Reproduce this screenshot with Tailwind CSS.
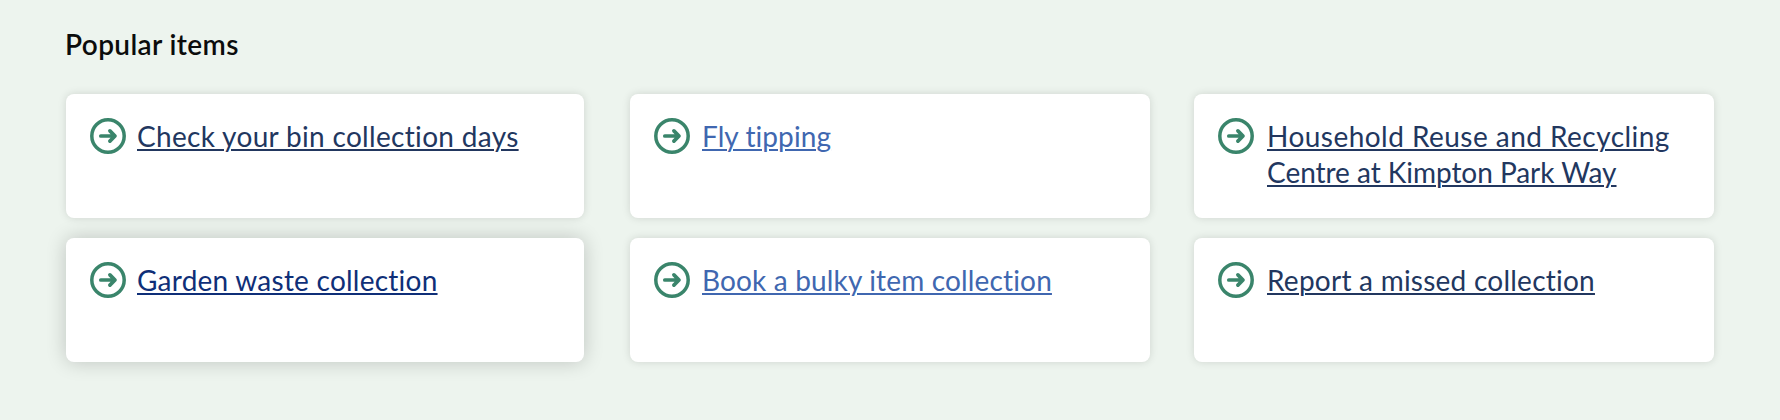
<!DOCTYPE html>
<html lang="en">
<head>
  <meta charset="UTF-8" />
  <meta name="viewport" content="width=device-width, initial-scale=1.0"/>
  <title>Popular items</title>
  <script src="https://cdn.jsdelivr.net/npm/@tailwindcss/browser@4"></script>
</head>
<body class="bg-[#edf4ee] min-h-screen overflow-hidden font-['Lato',sans-serif]">
  <svg class="hidden">
    <symbol id="arrow" viewBox="0 0 36 36">
      <circle cx="18" cy="18" r="16.2" fill="none" stroke="#3a856b" stroke-width="3.5" />
      <path d="M10.8 18H24M19.9 12.9L25 18L19.9 23.1" fill="none" stroke="#3a856b" stroke-width="3.7" stroke-linecap="round" stroke-linejoin="round" />
    </symbol>
  </svg>

  <section class="pl-[66px] pt-[26px]">
    <h2 class="-ml-px text-[28px] leading-9 font-semibold tracking-[0.38px] text-[#0b0c0c]">Popular items</h2>

    <ul class="mt-8 grid grid-cols-[520px_520px_520px] auto-rows-[124px] gap-x-11 gap-y-5 text-[28px] leading-9 text-[#22375f]">
      <li class="mr-0.5 flex items-start gap-[11px] rounded-lg bg-white p-6 shadow-[0_0_8px_rgba(0,0,0,0.13)]">
        <svg class="size-9 shrink-0"><use href="#arrow" /></svg>
        <a href="#" class="whitespace-nowrap tracking-[0.32px] underline decoration-2 underline-offset-2">Check your bin collection days</a>
      </li>
      <li class="flex items-start gap-3 rounded-lg bg-white p-6 shadow-[0_0_8px_rgba(0,0,0,0.13)]">
        <svg class="size-9 shrink-0"><use href="#arrow" /></svg>
        <a href="#" class="whitespace-nowrap tracking-[0.08px] text-[#4067b0] underline decoration-2 underline-offset-2">Fly tipping</a>
      </li>
      <li class="flex items-start gap-[13px] rounded-lg bg-white p-6 shadow-[0_0_8px_rgba(0,0,0,0.13)]">
        <svg class="size-9 shrink-0"><use href="#arrow" /></svg>
        <a href="#" class="whitespace-nowrap underline decoration-2 underline-offset-2"><span class="tracking-[0.46px]">Household Reuse and Recycling</span><br /><span class="tracking-[-0.04px]">Centre at Kimpton Park Way</span></a>
      </li>
      <li class="mr-0.5 flex items-start gap-[11px] rounded-lg bg-white p-6 shadow-[0_0_20px_rgba(0,0,0,0.2)]">
        <svg class="size-9 shrink-0"><use href="#arrow" /></svg>
        <a href="#" class="whitespace-nowrap tracking-[0.24px] text-[#0f2f78] underline decoration-2 underline-offset-2">Garden waste collection</a>
      </li>
      <li class="flex items-start gap-3 rounded-lg bg-white p-6 shadow-[0_0_8px_rgba(0,0,0,0.13)]">
        <svg class="size-9 shrink-0"><use href="#arrow" /></svg>
        <a href="#" class="whitespace-nowrap tracking-[0.16px] text-[#4067b0] underline decoration-2 underline-offset-2">Book a bulky item collection</a>
      </li>
      <li class="flex items-start gap-[13px] rounded-lg bg-white p-6 shadow-[0_0_8px_rgba(0,0,0,0.13)]">
        <svg class="size-9 shrink-0"><use href="#arrow" /></svg>
        <a href="#" class="whitespace-nowrap tracking-[0.24px] underline decoration-2 underline-offset-2">Report a missed collection</a>
      </li>
    </ul>
  </section>
</body>
</html>
